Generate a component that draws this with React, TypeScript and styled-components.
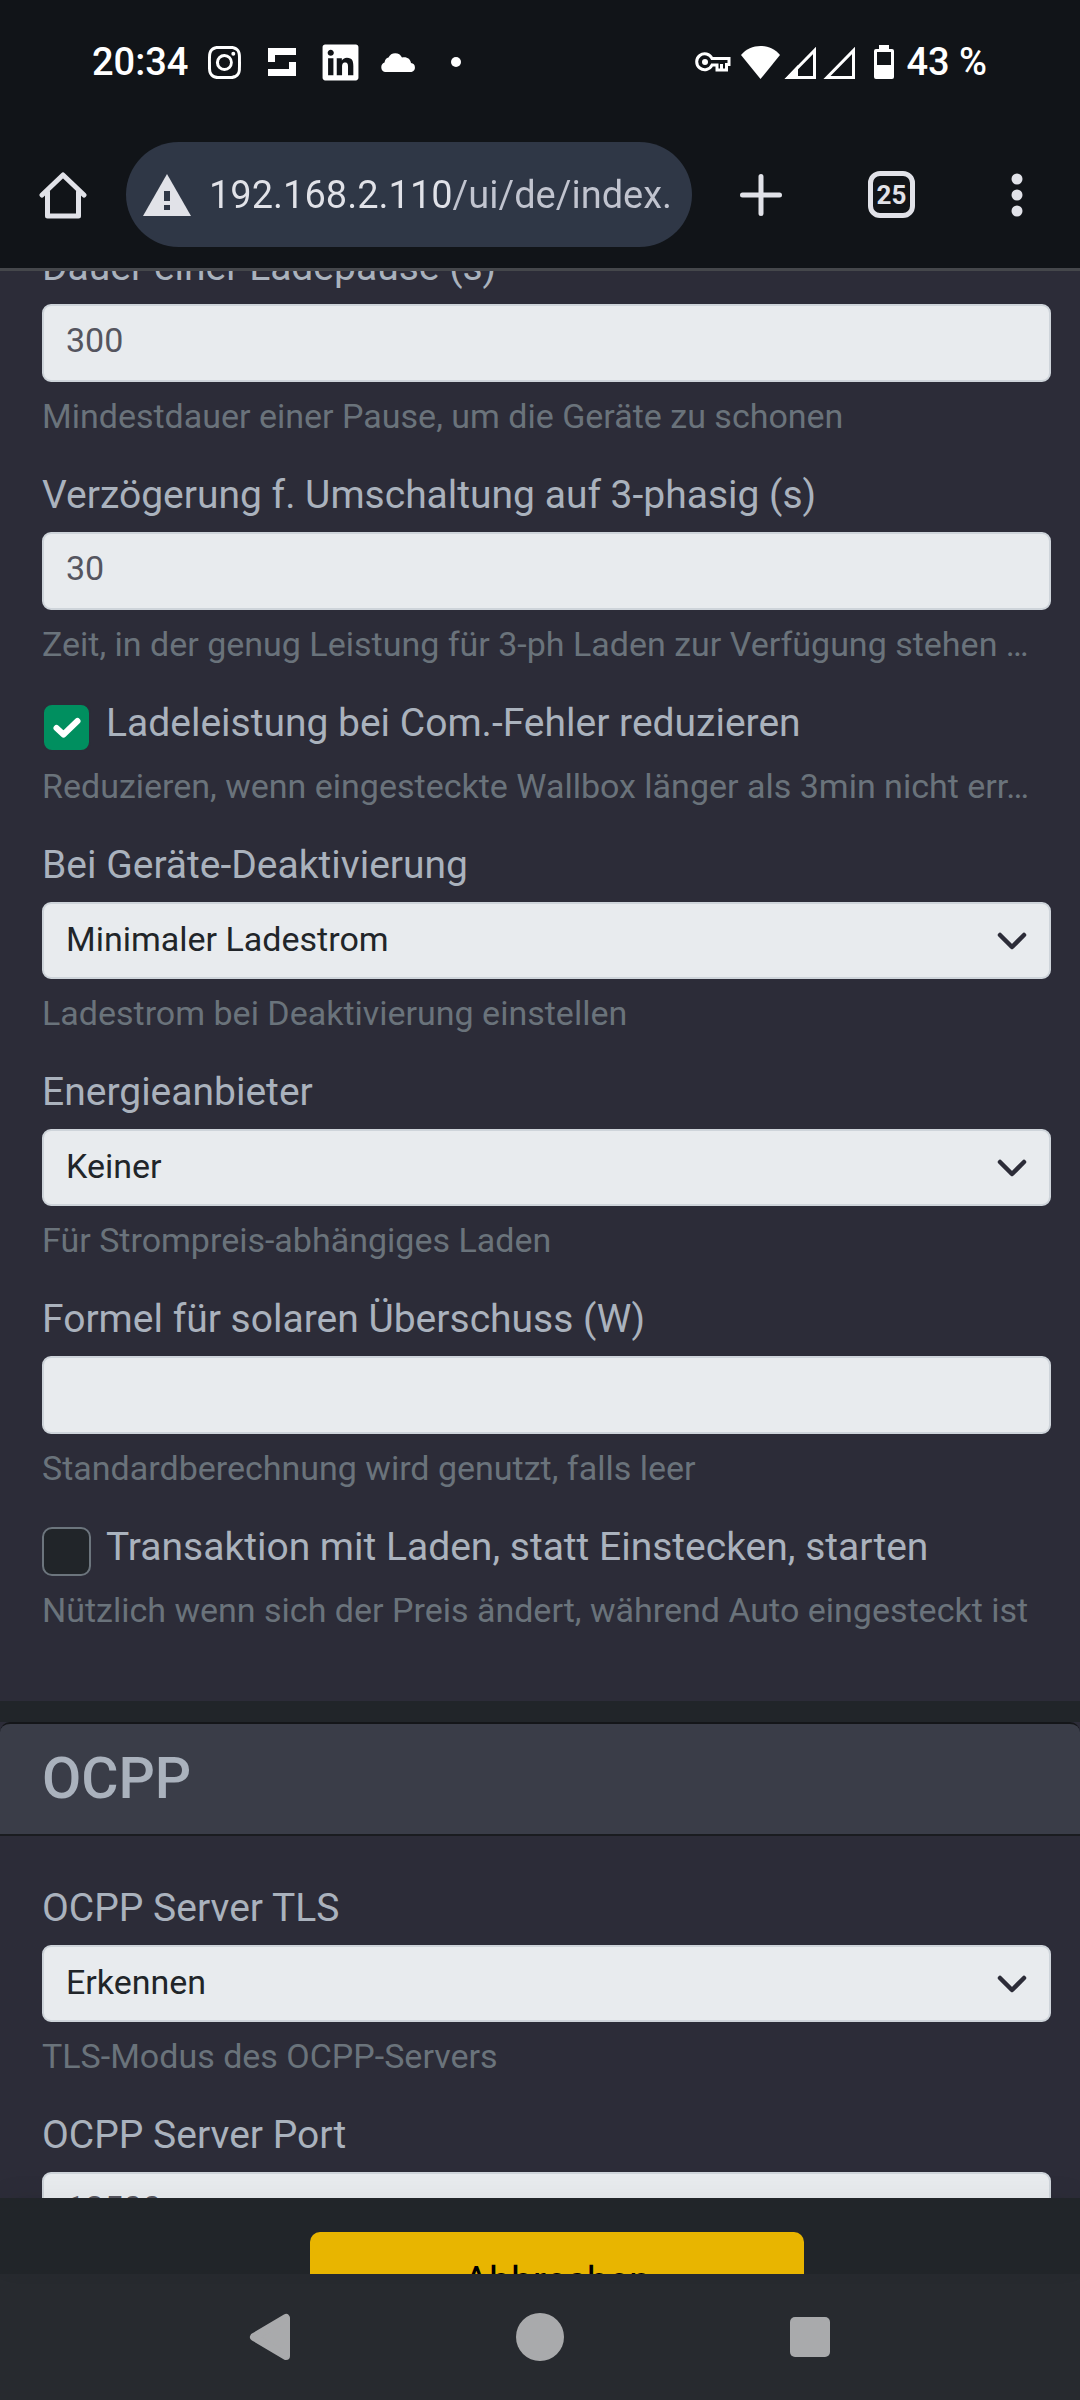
import React, { useId, useState } from "react";
import styled, { createGlobalStyle } from "styled-components";
import { BsInstagram } from "react-icons/bs";
import { FaLinkedin } from "react-icons/fa";

const GlobalStyle = createGlobalStyle`
  * { box-sizing: border-box; }
  html, body { margin: 0; background: #212529; }
  body { font-family: Roboto, "Noto Sans", sans-serif; }
  button, input, select { font-family: inherit; margin: 0; }
`;

const Screen = styled.div`
  display: flex;
  flex-direction: column;
  height: 100vh;
  overflow: hidden;
`;

const StatusBar = styled.header`
  display: flex;
  flex: none;
  align-items: center;
  justify-content: space-between;
  height: 124px;
  padding: 0 93px 0 92px;
  background: #111418;
  color: #fff;
  font-size: 38px;
  font-weight: 500;
  line-height: 48px;
`;

const StatusGroup = styled.div<{ $gap: number }>`
  display: flex;
  align-items: center;
  gap: ${(p) => p.$gap}px;
  svg { display: block; flex: none; }
`;

const StatusIcon = styled.span`
  display: flex;
  align-items: center;
  justify-content: center;
  width: 36px;
`;

const Toolbar = styled.nav`
  display: flex;
  flex: none;
  align-items: center;
  padding: 18px 0 21px;
  background: #111418;
  border-bottom: 3px solid #45474b;
  box-sizing: content-box;
`;

const ToolButton = styled.button<{ $width: number }>`
  display: flex;
  flex: none;
  align-items: center;
  justify-content: center;
  width: ${(p) => p.$width}px;
  height: 105px;
  padding: 0;
  border: 0;
  background: none;
  color: #e1e2e8;
`;

const TabCount = styled.span`
  display: flex;
  align-items: center;
  justify-content: center;
  width: 47px;
  height: 47px;
  border: 5px solid #e1e2e8;
  border-radius: 12px;
  font-size: 26px;
  font-weight: 700;
  line-height: 32px;
`;

const AddressBar = styled.div`
  display: flex;
  flex: 1;
  align-items: center;
  gap: 18px;
  min-width: 0;
  height: 105px;
  padding: 0 18px 0 17px;
  border-radius: 53px;
  background: #2f3746;
  svg { flex: none; }
`;

const AddressInput = styled.input`
  flex: 1;
  min-width: 0;
  height: 64px;
  padding: 0;
  border: 0;
  outline: 0;
  background: linear-gradient(90deg, #e1e2e8 243px, #c1c4cf 243px);
  -webkit-background-clip: text;
  background-clip: text;
  color: transparent;
  font-size: 38px;
`;

const Viewport = styled.main`
  flex: 1;
  min-height: 0;
  overflow: hidden;
`;

const Card = styled.section`
  background: #2c2c38;
`;

const CardHeader = styled.h2`
  margin: 21px 0 0;
  padding: 20px 42px;
  border-top: 2px solid #141619;
  border-bottom: 2px solid #1a1c20;
  border-radius: 10px 10px 0 0;
  background: #3a3d48;
  color: #aab2bd;
  font-size: 57px;
  font-weight: 500;
  line-height: 70px;
`;

const Fields = styled.div<{ $scrolled?: boolean }>`
  display: flex;
  flex-direction: column;
  gap: 31px;
  margin-top: ${(p) => (p.$scrolled ? -28 : 0)}px;
  padding: ${(p) => (p.$scrolled ? 0 : 48)}px 29px 67px 42px;
`;

const Field = styled.div`
  display: flex;
  flex-direction: column;
`;

const Label = styled.label`
  margin-bottom: 13px;
  color: #aab2bd;
  font-size: 39px;
  line-height: 48px;
  white-space: nowrap;
`;

const Hint = styled.small`
  margin-top: 10px;
  color: #6a737b;
  font-size: 34px;
  line-height: 48px;
  white-space: nowrap;
`;

const TextBox = styled.input`
  width: 100%;
  height: 78px;
  padding: 0 22px 6px;
  border: 2px solid #ced4da;
  border-radius: 9px;
  outline: 0;
  background: #e8ebee;
  color: #55555f;
  font-size: 34px;
`;

const SelectBox = styled.div`
  display: grid;
  align-items: center;
  > * { grid-area: 1 / 1; }
  > svg { justify-self: end; margin-right: 23px; pointer-events: none; }
`;

const Select = styled.select`
  width: 100%;
  height: 77px;
  padding: 0 70px 4px 22px;
  border: 2px solid #ced4da;
  border-radius: 9px;
  appearance: none;
  background: #e8ebee;
  color: #212529;
  font-size: 34px;
`;

const CheckRow = styled.div`
  display: flex;
  align-items: flex-start;
  gap: 15px;
  height: 53px;
`;

const CheckBox = styled.span`
  display: grid;
  flex: none;
  place-items: center;
  margin-top: 4px;
  > * { grid-area: 1 / 1; }
  > svg { pointer-events: none; }
`;

const CheckInput = styled.input`
  width: 49px;
  height: 49px;
  border: 2px solid #6c757d;
  border-radius: 10px;
  appearance: none;
  background: #212529;
  &:checked { border-color: #2c2c38; background: #008f5f; }
`;

const FooterShade = styled.div`
  flex: none;
  position: relative;
  box-shadow: 0 -6px 26px rgba(0, 0, 0, 0.04);
`;

const Footer = styled.footer`
  display: flex;
  justify-content: center;
  height: 76px;
  padding: 34px 0 0 34px;
  overflow: hidden;
  background: #212529;
`;

const CancelButton = styled.button`
  flex: none;
  width: 494px;
  height: 98px;
  border: 0;
  border-radius: 10px;
  background: #e8b500;
  color: #000;
  font-size: 39px;
`;

const NavBar = styled.nav`
  display: flex;
  flex: none;
  align-items: center;
  justify-content: center;
  height: 126px;
  background: #272a2f;
`;

const NavButton = styled.button`
  display: flex;
  align-items: center;
  justify-content: center;
  width: 25%;
  height: 100%;
  padding: 0;
  border: 0;
  background: none;
  color: #a9aaac;
`;

const Signal = ({ partial }: { partial?: boolean }) => (
  <svg width="35" height="33" viewBox="0 0 35 33" fill="none">
    <path d="M30.500 4.500 V31.500 H4 Z" stroke="#fff" strokeWidth="3" />
    {partial && <path d="M1 33 L14 19 V33 Z" fill="#fff" />}
  </svg>
);

const Chevron = () => (
  <svg width="32" height="22" viewBox="0 0 32 22" fill="none">
    <path d="M4 5 L16 17 L28 5" stroke="#2c2c38" strokeWidth="4.500" strokeLinecap="round" strokeLinejoin="round" />
  </svg>
);

function TextField({ label, value, hint }: { label: string; value: string; hint?: string }) {
  const id = useId();
  return (
    <Field>
      <Label htmlFor={id}>{label}</Label>
      <TextBox id={id} type="text" inputMode="numeric" defaultValue={value} />
      {hint && <Hint>{hint}</Hint>}
    </Field>
  );
}

function SelectField({ label, value, hint }: { label: string; value: string; hint: string }) {
  const id = useId();
  return (
    <Field>
      <Label htmlFor={id}>{label}</Label>
      <SelectBox>
        <Select id={id} defaultValue={value}>
          <option>{value}</option>
        </Select>
        <Chevron />
      </SelectBox>
      <Hint>{hint}</Hint>
    </Field>
  );
}

function CheckField({ label, hint, initial = false }: { label: string; hint: string; initial?: boolean }) {
  const id = useId();
  const [checked, setChecked] = useState(initial);
  return (
    <Field>
      <CheckRow>
        <CheckBox>
          <CheckInput id={id} type="checkbox" checked={checked} onChange={(e) => setChecked(e.target.checked)} />
          {checked && (
            <svg width="30" height="24" viewBox="0 0 30 24" fill="none">
              <path d="M4.500 12 L11.500 18.500 L25.500 5" stroke="#fff" strokeWidth="6" strokeLinecap="round" strokeLinejoin="round" />
            </svg>
          )}
        </CheckBox>
        <Label htmlFor={id}>{label}</Label>
      </CheckRow>
      <Hint>{hint}</Hint>
    </Field>
  );
}

export default function App() {
  return (
    <Screen>
      <GlobalStyle />
      <StatusBar>
        <StatusGroup $gap={18}>
          <span>20:34</span>
          <StatusGroup $gap={22}>
            <StatusIcon>
              <BsInstagram size={33} />
            </StatusIcon>
            <StatusIcon>
              <svg width="36" height="36" viewBox="0 0 36 36" fill="#fff">
                <path d="M4 4 H32 V11 H11 V18 H4 Z M32 18 V32 H4 V25 H25 V18 Z" />
              </svg>
            </StatusIcon>
            <StatusIcon>
              <FaLinkedin size={41} />
            </StatusIcon>
            <StatusIcon>
              <svg width="36" height="20" viewBox="0 0 36 20" fill="#fff">
                <path d="M5 20 A5 5 0 0 1 4.500 10.500 C5 7.500 6.500 6 8.500 5.500 A7.500 7.500 0 0 1 22 5.500 C27 4.500 30.500 7 31 11 A4.600 4.600 0 0 1 31.500 20 Z" />
              </svg>
            </StatusIcon>
            <StatusIcon>
              <svg width="12" height="12" viewBox="0 0 12 12" fill="#fff">
                <circle cx="6" cy="6" r="5" />
              </svg>
            </StatusIcon>
          </StatusGroup>
        </StatusGroup>
        <StatusGroup $gap={4}>
          <svg width="42" height="22" viewBox="0 0 42 22" fill="none" stroke="#fff" strokeWidth="3">
            <path d="M17 7.500 H34 V13.500 H31.500 V19 H22 V14 H17 A8 8 0 1 1 17 7.500 Z" />
            <path d="M26.500 13 V18" />
            <circle cx="10" cy="11" r="3" fill="#fff" stroke="none" />
          </svg>
          <svg width="39" height="33" viewBox="0 0 40 33" preserveAspectRatio="none" fill="#fff">
            <path d="M0 9 C10 -3 30 -3 40 9 L20 33 Z" />
          </svg>
          <Signal partial />
          <Signal />
          <svg width="40" height="34" viewBox="0 0 40 34">
            <path d="M17 0 H27 V4 H30 Q32 4 32 6 V32 Q32 34 30 34 H14 Q12 34 12 32 V6 Q12 4 14 4 H17 Z" fill="#fff" />
            <path d="M15 7 H29 V20 H15 Z" fill="#111418" />
          </svg>
          <span>43 %</span>
        </StatusGroup>
      </StatusBar>

      <Toolbar>
        <ToolButton $width={126} aria-label="Startseite">
          <svg width="48" height="48" viewBox="0 0 48 48" fill="none" stroke="currentColor" strokeWidth="5" strokeLinecap="round" strokeLinejoin="round">
            <path d="M3 24 L24 4 L45 24" />
            <path d="M8.500 21 V45 H39.500 V21" />
          </svg>
        </ToolButton>
        <AddressBar>
          <svg width="48" height="42" viewBox="0 0 48 42">
            <path d="M24 0 L48 42 H0 Z" fill="#e1e2e8" />
            <path d="M21 17 H27 V27 H21 Z M21 31 H27 V36 H21 Z" fill="#2f3746" />
          </svg>
          <AddressInput aria-label="Adresse" defaultValue="192.168.2.110/ui/de/index." />
        </AddressBar>
        <ToolButton $width={138} aria-label="Neuer Tab">
          <svg width="42" height="42" viewBox="0 0 42 42" stroke="currentColor" strokeWidth="5" strokeLinecap="round">
            <path d="M21 2.500 V39.500 M2.500 21 H39.500" />
          </svg>
        </ToolButton>
        <ToolButton $width={123}>
          <TabCount>25</TabCount>
        </ToolButton>
        <ToolButton $width={127} aria-label="Menü">
          <svg width="12" height="44" viewBox="0 0 12 44" fill="currentColor">
            <circle cx="6" cy="6" r="5.500" />
            <circle cx="6" cy="22" r="5.500" />
            <circle cx="6" cy="38" r="5.500" />
          </svg>
        </ToolButton>
      </Toolbar>

      <Viewport>
        <Card>
          <Fields $scrolled>
            <TextField label="Dauer einer Ladepause (s)" value="300" hint="Mindestdauer einer Pause, um die Geräte zu schonen" />
            <TextField label="Verzögerung f. Umschaltung auf 3-phasig (s)" value="30" hint="Zeit, in der genug Leistung für 3-ph Laden zur Verfügung stehen …" />
            <CheckField initial label="Ladeleistung bei Com.-Fehler reduzieren" hint="Reduzieren, wenn eingesteckte Wallbox länger als 3min nicht err…" />
            <SelectField label="Bei Geräte-Deaktivierung" value="Minimaler Ladestrom" hint="Ladestrom bei Deaktivierung einstellen" />
            <SelectField label="Energieanbieter" value="Keiner" hint="Für Strompreis-abhängiges Laden" />
            <TextField label="Formel für solaren Überschuss (W)" value="" hint="Standardberechnung wird genutzt, falls leer" />
            <CheckField label="Transaktion mit Laden, statt Einstecken, starten" hint="Nützlich wenn sich der Preis ändert, während Auto eingesteckt ist" />
          </Fields>
        </Card>
        <Card>
          <CardHeader>OCPP</CardHeader>
          <Fields>
            <SelectField label="OCPP Server TLS" value="Erkennen" hint="TLS-Modus des OCPP-Servers" />
            <TextField label="OCPP Server Port" value="12500" />
          </Fields>
        </Card>
      </Viewport>

      <FooterShade>
        <Footer>
          <CancelButton type="button">Abbrechen</CancelButton>
        </Footer>
      </FooterShade>

      <NavBar>
        <NavButton aria-label="Zurück">
          <svg width="42" height="48" viewBox="0 0 42 48" fill="currentColor" stroke="currentColor" strokeWidth="8" strokeLinejoin="round">
            <path d="M5 24 L37 5 V43 Z" />
          </svg>
        </NavButton>
        <NavButton aria-label="Home">
          <svg width="50" height="50" viewBox="0 0 50 50">
            <circle cx="25" cy="25" r="24" fill="currentColor" />
          </svg>
        </NavButton>
        <NavButton aria-label="Übersicht">
          <svg width="40" height="40" viewBox="0 0 40 40">
            <rect width="40" height="40" rx="5" fill="currentColor" />
          </svg>
        </NavButton>
      </NavBar>
    </Screen>
  );
}
